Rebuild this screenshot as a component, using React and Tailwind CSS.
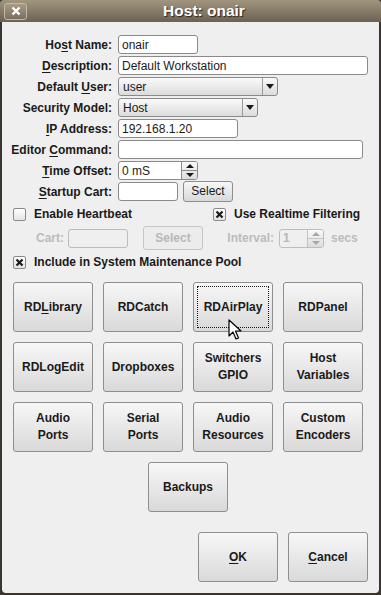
import React from 'react';

// Host dialog - Rivendell style (Qt3 / Human theme)

const U = ({ children }) => <span className="underline underline-offset-[2px]">{children}</span>;

const Label = ({ children }) => (
  <div className="w-[110px] text-right font-bold text-[12px] text-[#1a1a1a] leading-none">{children}</div>
);

const TextBox = ({ w, value = '', disabled }) => (
  <div
    className={`h-[19px] ${w} rounded-[3px] border px-[3px] flex items-center text-[12px] leading-none ${
      disabled ? 'border-[#bdbdbd] bg-[#efefef] text-[#b8b8b8]' : 'border-[#8a8a8a] bg-white text-[#1a1a1a]'
    }`}
  >
    {value}
  </div>
);

const DownArrow = () => (
  <svg width="8" height="5" viewBox="0 0 8 5">
    <path d="M0 0 L8 0 L4 5 Z" fill="#1a1a1a" />
  </svg>
);

const Combo = ({ w, value }) => (
  <div className={`h-[19px] ${w} flex rounded-[3px] border border-[#8a8a8a] bg-gradient-to-b from-[#fafafa] to-[#dcdcdc] text-[12px] text-[#1a1a1a]`}>
    <div className="flex-1 flex items-center px-[4px] leading-none">{value}</div>
    <div className="w-[15px] border-l border-[#9a9a9a] flex items-center justify-center">
      <DownArrow />
    </div>
  </div>
);

const SpinBtns = ({ disabled }) => (
  <div className={`w-[16px] h-full flex flex-col border-l ${disabled ? 'border-[#c4c4c4]' : 'border-[#8a8a8a]'} bg-gradient-to-b from-[#fafafa] to-[#dcdcdc]`}>
    <div className="flex-1 flex items-center justify-center">
      <svg width="8" height="4" viewBox="0 0 8 4">
        <path d="M0 4 L8 4 L4 0 Z" fill={disabled ? '#a8a8a8' : '#1a1a1a'} />
      </svg>
    </div>
    <div className={`h-px ${disabled ? 'bg-[#c4c4c4]' : 'bg-[#8a8a8a]'}`} />
    <div className="flex-1 flex items-center justify-center">
      <svg width="8" height="4" viewBox="0 0 8 4">
        <path d="M0 0 L8 0 L4 4 Z" fill={disabled ? '#a8a8a8' : '#1a1a1a'} />
      </svg>
    </div>
  </div>
);

const Spin = ({ w, value, disabled }) => (
  <div
    className={`h-[19px] ${w} flex rounded-[3px] border overflow-hidden text-[12px] ${
      disabled ? 'border-[#bdbdbd] text-[#b8b8b8] bg-[#efefef]' : 'border-[#8a8a8a] text-[#1a1a1a] bg-white'
    }`}
  >
    <div className="flex-1 flex items-center px-[3px] leading-none">{value}</div>
    <SpinBtns disabled={disabled} />
  </div>
);

const Check = ({ checked, children }) => (
  <div className="flex items-center">
    <div className="w-[13px] h-[13px] border border-[#8a8a8a] rounded-[2px] bg-gradient-to-b from-[#ffffff] to-[#e4e4e4] flex items-center justify-center">
      {checked && (
        <svg width="9" height="9" viewBox="0 0 9 9">
          <path d="M1.5 1.5 L7.5 7.5 M7.5 1.5 L1.5 7.5" stroke="#1a1a1a" strokeWidth="2.2" />
        </svg>
      )}
    </div>
    <span className="ml-[8px] font-bold text-[12px] text-[#1a1a1a] leading-none">{children}</span>
  </div>
);

const Btn = ({ children, w = 'w-[80px]', h = 'h-[50px]', focus, disabled }) => (
  <div
    className={`relative ${w} ${h} rounded-[3px] border flex items-center justify-center text-center font-bold text-[12px] leading-[17px] ${
      disabled
        ? 'border-[#c6c6c6] bg-[#ececec] text-[#b8b8b8]'
        : 'border-[#8e8e8e] bg-gradient-to-b from-[#f7f7f7] to-[#d9d9d9] text-[#1a1a1a]'
    }`}
  >
    {focus && <div className="absolute inset-[3px] border border-dotted border-[#1a1a1a]" />}
    <div>{children}</div>
  </div>
);

const Row = ({ label, children }) => (
  <div className="h-[21px] flex items-center">
    <Label>{label}</Label>
    <div className="ml-[6px] flex items-center">{children}</div>
  </div>
);

export default function App() {
  return (
    <div className="w-[381px] h-[595px] flex flex-col font-['Liberation_Sans',Arial,sans-serif] bg-[#3a352e]">
      {/* title bar */}
      <div className="h-[22px] rounded-t-[4px] bg-gradient-to-b from-[#a2967f] to-[#6c6252] flex items-center relative">
        <div className="ml-[4px] w-[23px] h-[17px] rounded-[3px] border border-[#c2b8a6] bg-gradient-to-b from-[#a89c87] to-[#7a6f5e] flex items-center justify-center">
          <svg width="10" height="10" viewBox="0 0 10 10">
            <path d="M1.5 1.5 L8.5 8.5 M8.5 1.5 L1.5 8.5" stroke="#ffffff" strokeWidth="2.4" />
          </svg>
        </div>
        <div className="absolute left-[27px] right-0 top-0 h-full flex items-center justify-center font-bold text-[15.5px] text-white [text-shadow:1px_1px_1px_#2a241c]">
          Host: onair
        </div>
      </div>

      {/* body */}
      <div className="flex-1 mx-[2px] mb-[2px] rounded-b-[4px] bg-[#efefef] flex flex-col pt-[12px]">
        <Row label={<>Ho<U>s</U>t Name:</>}>
          <TextBox w="w-[80px]" value="onair" />
        </Row>
        <Row label={<><U>D</U>escription:</>}>
          <TextBox w="w-[250px]" value="Default Workstation" />
        </Row>
        <Row label={<>Default <U>U</U>ser:</>}>
          <Combo w="w-[160px]" value="user" />
        </Row>
        <Row label="Security Model:">
          <Combo w="w-[140px]" value="Host" />
        </Row>
        <Row label={<><U>I</U>P Address:</>}>
          <TextBox w="w-[120px]" value="192.168.1.20" />
        </Row>
        <Row label={<>Editor <U>C</U>ommand:</>}>
          <TextBox w="w-[245px]" value="" />
        </Row>
        <Row label={<><U>T</U>ime Offset:</>}>
          <Spin w="w-[80px]" value="0 mS" />
        </Row>
        <Row label={<><U>S</U>tartup Cart:</>}>
          <TextBox w="w-[60px]" value="" />
          <div className="ml-[5px]">
            <Btn w="w-[50px]" h="h-[21px]">
              <span className="font-normal">Select</span>
            </Btn>
          </div>
        </Row>

        <div className="h-[24px] flex items-center pl-[11px]">
          <div className="w-[200px]">
            <Check>Enable Heartbeat</Check>
          </div>
          <Check checked>Use Realtime Filtering</Check>
        </div>

        <div className="h-[24px] flex items-center text-[12px] font-bold text-[#bcbcbc]">
          <div className="w-[62px] text-right leading-none">Cart:</div>
          <div className="ml-[4px]">
            <TextBox w="w-[60px]" disabled />
          </div>
          <div className="ml-[15px]">
            <Btn w="w-[60px]" h="h-[24px]" disabled>Select</Btn>
          </div>
          <div className="w-[71px] text-right leading-none">Interval:</div>
          <div className="ml-[5px]">
            <Spin w="w-[45px]" value="1" disabled />
          </div>
          <div className="ml-[7px] leading-none">secs</div>
        </div>

        <div className="h-[24px] flex items-center pl-[11px]">
          <Check checked>Include in System Maintenance Pool</Check>
        </div>

        {/* module buttons */}
        <div className="mt-[8px] pl-[11px] w-[361px]">
          <div className="grid grid-cols-[repeat(4,80px)] gap-[10px]">
            <Btn>RD<U>L</U>ibrary</Btn>
            <Btn>RDCatch</Btn>
            <Btn focus>RDAirPlay</Btn>
            <Btn>RDPanel</Btn>
            <Btn>RDLogEdit</Btn>
            <Btn>Dropboxes</Btn>
            <Btn>Switchers<br />GPIO</Btn>
            <Btn>Host<br />Variables</Btn>
            <Btn>Audio<br />Ports</Btn>
            <Btn>Serial<br />Ports</Btn>
            <Btn>Audio<br />Resources</Btn>
            <Btn>Custom<br />Encoders</Btn>
          </div>
          <div className="mt-[10px] w-[350px] flex justify-center">
            <Btn>Backups</Btn>
          </div>
        </div>

        <div className="mt-[20px] flex justify-end pr-[11px] gap-[10px]">
          <Btn><U>O</U>K</Btn>
          <Btn><U>C</U>ancel</Btn>
        </div>
      </div>

      {/* mouse pointer over RDAirPlay */}
      <svg className="absolute left-[228px] top-[319px]" width="14" height="22" viewBox="0 0 14 22">
        <path d="M1 1 L1 17 L5 13 L8 20 L10.5 19 L7.5 12 L13 12 Z" fill="#ffffff" stroke="#000000" strokeWidth="1.2" strokeLinejoin="round" />
      </svg>
    </div>
  );
}
